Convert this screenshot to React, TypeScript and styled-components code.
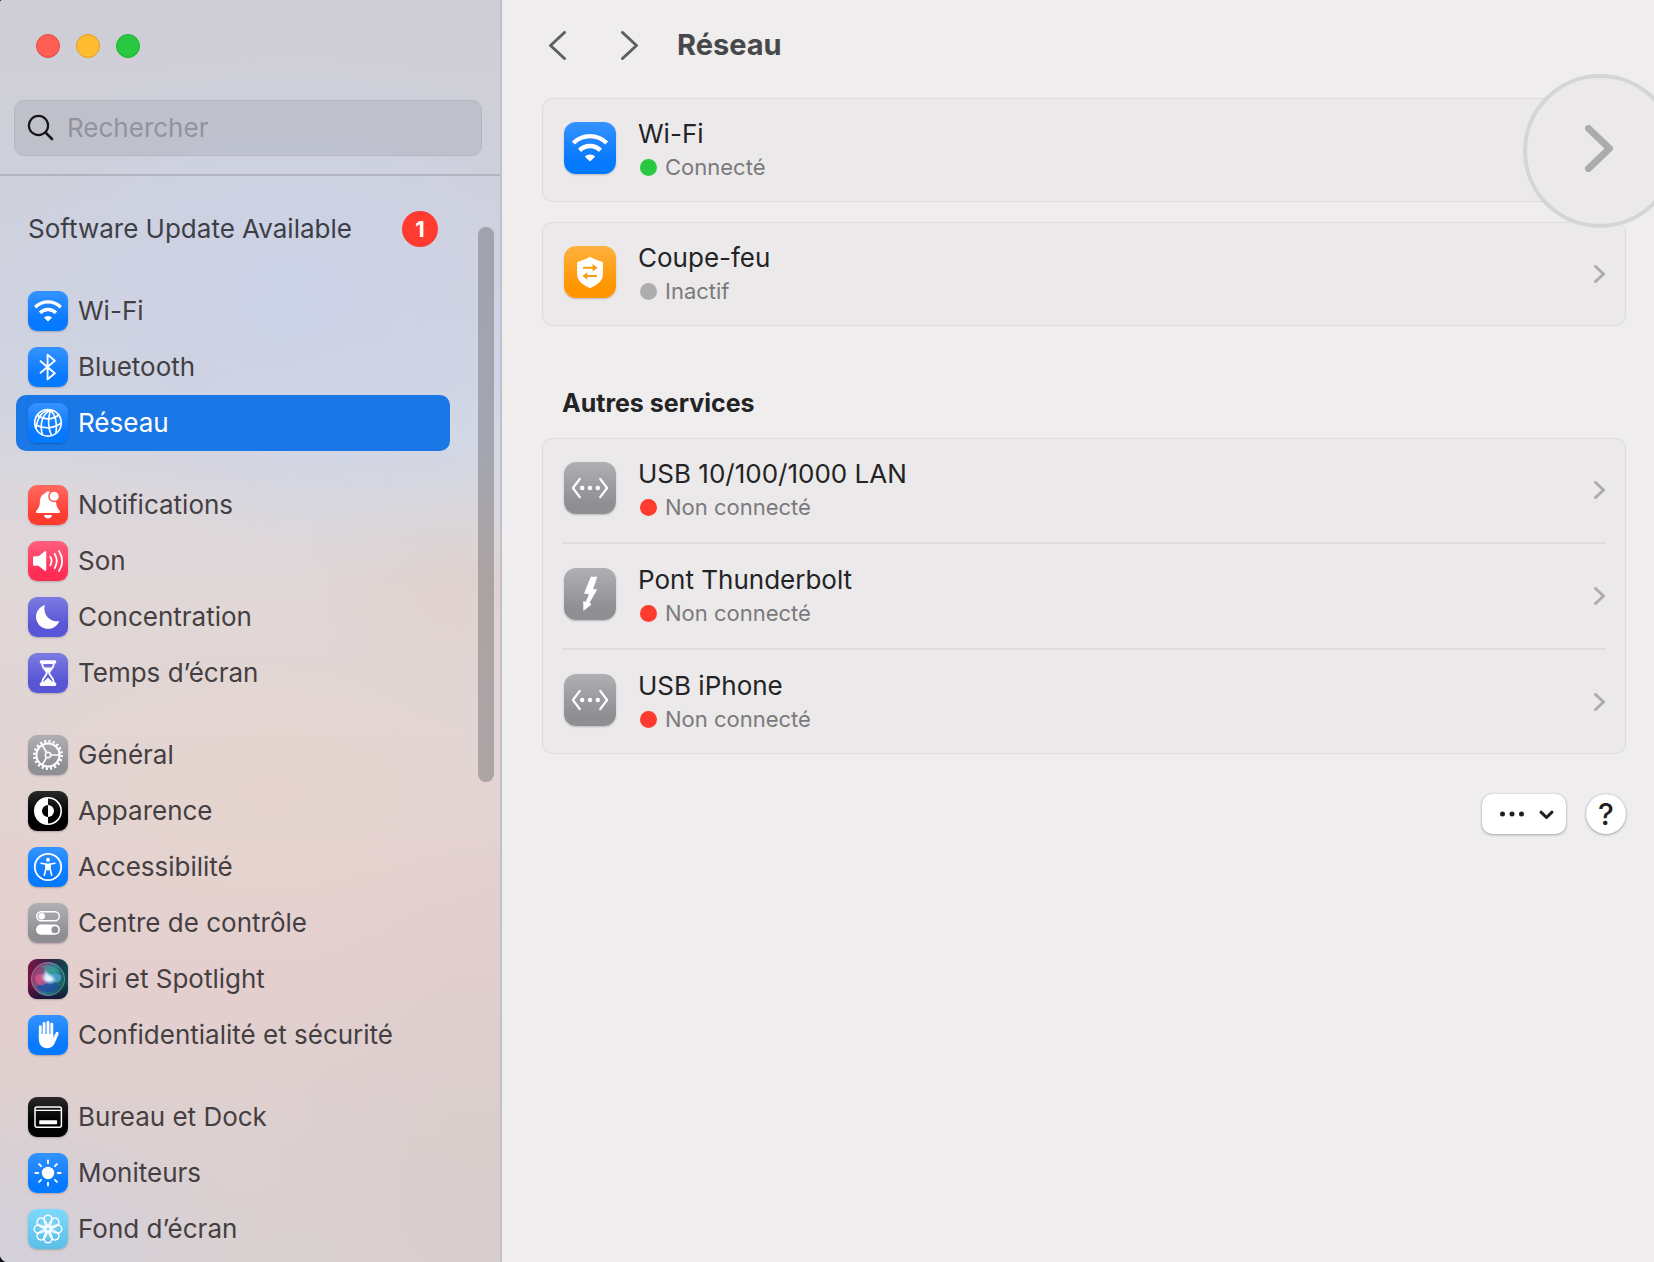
import React from "react";
import styled, { createGlobalStyle } from "styled-components";

const GlobalStyle = createGlobalStyle`
  *, *::before, *::after { box-sizing: border-box; }
  body {
    margin: 0;
    background: #111;
    font-family: Inter, "Liberation Sans", sans-serif;
    -webkit-font-smoothing: antialiased;
  }
  button, input { font: inherit; }
  ul { list-style: none; margin: 0; padding: 0; }
`;

const Window = styled.div`
  display: flex;
  height: 100vh;
  overflow: hidden;
  border-radius: 3px 0 0 8px;
  background: #efedee;
`;

/* ---------- Sidebar ---------- */

const Sidebar = styled.aside`
  position: relative;
  flex: none;
  display: flex;
  flex-direction: column;
  width: 502px;
  overflow: hidden;
  border-right: 2px solid #bfc0cd;
  background:
    radial-gradient(ellipse 340px 240px at 290px 290px, rgba(203, 210, 232, 0.9), rgba(203, 210, 232, 0) 100%),
    radial-gradient(ellipse 320px 160px at 470px 430px, rgba(211, 217, 230, 0.9), rgba(211, 217, 230, 0) 100%),
    radial-gradient(ellipse 160px 160px at 460px 570px, rgba(224, 208, 202, 0.8), rgba(224, 208, 202, 0) 100%),
    radial-gradient(ellipse 300px 160px at 270px 790px, rgba(230, 213, 205, 0.9), rgba(230, 213, 205, 0) 100%),
    radial-gradient(ellipse 260px 340px at 502px 1180px, rgba(216, 205, 203, 0.8), rgba(216, 205, 203, 0) 100%),
    radial-gradient(ellipse 260px 160px at 0 1250px, rgba(211, 208, 218, 1), rgba(211, 208, 218, 0) 100%),
    linear-gradient(180deg, #cfced5 0, #cfd0db 200px, #d1d4e0 400px, #dcd7dc 500px, #e1d7d7 600px, #e1d5d5 740px, #e3d1d0 860px, #e4cfce 980px, #dfd0d0 1100px, #d9d0d0 1262px);
`;

const TrafficLights = styled.div`
  display: flex;
  gap: 16px;
  padding: 34px 36px 42px;
`;

const Light = styled.button<{ $fill: string; $edge: string }>`
  width: 24px;
  height: 24px;
  padding: 0;
  border: 1px solid ${(p) => p.$edge};
  border-radius: 50%;
  background: ${(p) => p.$fill};
`;

const SearchArea = styled.div`
  padding: 0 18px 18px 14px;
  border-bottom: 2px solid #b3b4c0;
`;

const SearchBox = styled.label`
  display: flex;
  align-items: center;
  gap: 12px;
  height: 56px;
  padding: 0 12px;
  border: 1px solid #b4b5c0;
  border-radius: 10px;
  background: rgba(120, 125, 135, 0.18);
`;

const SearchInput = styled.input`
  flex: 1;
  min-width: 0;
  padding: 0;
  border: 0;
  outline: 0;
  background: transparent;
  color: #26262a;
  font-size: 26px;
  line-height: 34px;
  &::placeholder { color: #92939e; opacity: 1; }
`;

const SideNav = styled.nav`
  display: flex;
  flex-direction: column;
  gap: 26px;
  padding: 25px 50px 0 16px;
`;

const UpdateLink = styled.a`
  display: flex;
  align-items: center;
  justify-content: space-between;
  height: 56px;
  padding: 0 12px;
  color: #3e3f46;
  font-size: 26px;
  line-height: 34px;
  text-decoration: none;
  white-space: nowrap;
`;

const Badge = styled.span`
  width: 36px;
  height: 36px;
  border-radius: 50%;
  background: #ff3b30;
  color: #fff;
  font-size: 22px;
  font-weight: 700;
  line-height: 36px;
  text-align: center;
`;

const SideLink = styled.a`
  display: flex;
  align-items: center;
  gap: 10px;
  height: 56px;
  padding: 0 12px;
  border-radius: 10px;
  color: #443f42;
  font-size: 26px;
  line-height: 34px;
  text-decoration: none;
  white-space: nowrap;
  &[aria-current="page"] {
    background: #1a77e6;
    color: #fff;
  }
`;

const ScrollThumb = styled.div`
  position: absolute;
  top: 227px;
  right: 6px;
  width: 16px;
  height: 555px;
  border-radius: 8px;
  background: rgba(108, 106, 112, 0.46);
`;

const tones = {
  blue: "linear-gradient(#3593ff, #0a7aff 70%, #007aff)",
  red: "linear-gradient(#ff6a61, #ff3b30 80%)",
  pink: "linear-gradient(#ff5f80, #ff2d55 80%)",
  indigo: "linear-gradient(#7d7be2, #5856d6 70%)",
  gray: "linear-gradient(#b0b0b4, #8e8e93 80%)",
  black: "linear-gradient(#2a2a2a, #000 60%)",
  orange: "linear-gradient(#ffb03e, #ff9500 80%)",
  sky: "linear-gradient(#7fd9fb, #5bbde8)",
  siri: "linear-gradient(90deg, #7a1440, #37224b 50%, #0d4a4c)",
};

type Tone = keyof typeof tones;

const Tile = styled.span<{ $tone: Tone; $size: number }>`
  flex: none;
  display: block;
  width: ${(p) => p.$size}px;
  height: ${(p) => p.$size}px;
  border-radius: ${(p) => (p.$size > 40 ? 12 : 9)}px;
  background: ${(p) => tones[p.$tone]};
  box-shadow: 0 1px 2px rgba(0, 0, 0, 0.22);
  svg { display: block; width: 100%; height: 100%; }
`;

/* ---------- Main pane ---------- */

const Main = styled.main`
  flex: 1;
  min-width: 0;
  padding: 0 28px 0 40px;
`;

const Header = styled.header`
  display: flex;
  align-items: center;
  height: 98px;
  padding: 0 0 8px 3px;
`;

const NavButton = styled.button`
  display: flex;
  align-items: center;
  justify-content: center;
  width: 24px;
  height: 36px;
  margin-right: 48px;
  padding: 0;
  border: 0;
  background: none;
  color: #5f5e60;
  & + & { margin-right: 36px; }
`;

const Title = styled.h1`
  margin: 0;
  color: #48474a;
  font-size: 29px;
  font-weight: 700;
  line-height: 38px;
`;

const Cards = styled.div`
  display: grid;
  gap: 20px;
`;

const Card = styled.ul`
  border-radius: 10px;
  background: #ebe9ea;
  box-shadow: inset 0 0 0 1px #dddbdc;
`;

const CardItem = styled.li`
  position: relative;
  & + &::before {
    content: "";
    display: block;
    height: 2px;
    margin: 0 20px;
    background: #dddbdc;
  }
`;

const ServiceLink = styled.a`
  display: flex;
  align-items: center;
  gap: 22px;
  padding: 19px 21px 19px 22px;
  color: #adabac;
  text-decoration: none;
`;

const ServiceIcon = styled.span`
  align-self: flex-start;
  padding-top: 5px;
`;

const ServiceText = styled.span`
  flex: 1;
  display: flex;
  flex-direction: column;
`;

const ServiceName = styled.span`
  color: #242325;
  font-size: 26px;
  line-height: 34px;
`;

const Status = styled.span<{ $dot: string }>`
  display: flex;
  align-items: center;
  gap: 8px;
  padding-left: 2px;
  color: #7b797b;
  font-size: 22px;
  line-height: 32px;
  &::before {
    content: "";
    width: 17px;
    height: 17px;
    border-radius: 50%;
    background: ${(p) => p.$dot};
  }
`;

const Magnifier = styled.span`
  position: absolute;
  top: -24px;
  right: -51px;
  display: flex;
  align-items: center;
  justify-content: center;
  width: 154px;
  height: 154px;
  padding: 0 2px 5px 0;
  border: 4px solid #d6d5d6;
  border-radius: 50%;
  background: #ebe9ea;
  color: #adabac;
`;

const SectionTitle = styled.h2`
  margin: 60px 0 18px;
  padding-left: 20px;
  color: #242325;
  font-size: 25px;
  font-weight: 700;
  line-height: 34px;
`;

const Footer = styled.footer`
  display: flex;
  justify-content: flex-end;
  gap: 20px;
  padding-top: 40px;
`;

const FooterButton = styled.button<{ $round?: boolean }>`
  display: flex;
  align-items: center;
  justify-content: center;
  width: ${(p) => (p.$round ? 40 : 84)}px;
  height: 40px;
  padding: 0;
  border: 0;
  border-radius: ${(p) => (p.$round ? 20 : 10)}px;
  background: #fff;
  box-shadow: 0 0 1px rgba(0, 0, 0, 0.3), 0 1px 3px rgba(0, 0, 0, 0.28);
  color: #1f1f21;
  font-size: 30px;
  font-weight: 500;
  line-height: 40px;
`;

/* ---------- Glyphs ---------- */

const line = {
  fill: "none",
  stroke: "#fff",
  strokeLinecap: "round" as const,
  strokeLinejoin: "round" as const,
};

const WifiGlyph = () => (
  <svg viewBox="0 0 40 40" aria-hidden="true">
    <path d="M7.200 16.200a18 18 0 0 1 25.600 0" {...line} strokeLinecap="butt" strokeWidth="3.400" />
    <path d="M12 21.800a11.300 11.300 0 0 1 16 0" {...line} strokeLinecap="butt" strokeWidth="3.400" />
    <path d="M16 26.600a5.600 5.600 0 0 1 8 0L20.700 29.900a1 1 0 0 1-1.400 0Z" fill="#fff" />
  </svg>
);

const BluetoothGlyph = () => (
  <svg viewBox="0 0 40 40" aria-hidden="true">
    <path d="M12.6 14.2 26.8 26.2 19.6 32.4V7.6L26.8 13.8 12.6 25.8" {...line} strokeWidth="1.9" />
  </svg>
);

const GlobeGlyph = () => (
  <svg viewBox="0 0 40 40" aria-hidden="true">
    <g {...line} strokeWidth="1.6">
      <circle cx="20" cy="19.8" r="13.3" />
      <path d="M22.5 7C15 11 11 20 14.5 32" />
      <path d="M22.5 7C20 15 20 25 23.5 32.5" />
      <path d="M22.5 7c5 5 7 14 5.5 22.5" />
      <path d="M22.5 7C14 8 10 13 8 25" />
      <path d="M9.5 12.5c6 4 14 4.500 21.5-.5" />
      <path d="M7 21.500c8 4.500 18 4.500 26.2-1.500" />
    </g>
  </svg>
);

const BellGlyph = () => (
  <svg viewBox="0 0 40 40" aria-hidden="true">
    <path
      d="M8 26.7c0-1.500 3.7-3.2 3.9-9.2.1-5.5 2.3-8.3 5.4-9.2C17.8 7 18.7 6.6 20 6.6s2.2.4 2.7 1.7c3.1.9 5.3 3.7 5.4 9.2.2 6 3.9 7.7 3.9 9.2 0 .8-.6 1.4-1.6 1.4H9.6c-1 0-1.6-.6-1.6-1.4ZM16 30h8c-.2 2-1.9 3.5-4 3.5s-3.8-1.5-4-3.5Z"
      fill="#fff"
    />
    <circle cx="26.2" cy="11.2" r="6" fill="#ff574e" />
    <circle cx="26.2" cy="11.2" r="4.5" fill="#fff" />
  </svg>
);

const SpeakerGlyph = () => (
  <svg viewBox="0 0 40 40" aria-hidden="true">
    <path
      d="M6.5 15.2h4.1l6.2-5c.7-.5 1.4-.2 1.4.7v18.2c0 .9-.7 1.2-1.4.7l-6.2-5H6.5c-.9 0-1.5-.6-1.5-1.5v-6.6c0-.9.6-1.5 1.5-1.5Z"
      fill="#fff"
    />
    <g {...line} strokeWidth="1.8">
      <path d="M22.3 15.8q2.6 4.2 0 8.4" />
      <path d="M26.6 12.8q4.4 7.2 0 14.4" />
      <path d="M31 9.9q6.4 10.1 0 20.2" />
    </g>
  </svg>
);

const MoonGlyph = () => (
  <svg viewBox="0 0 40 40" aria-hidden="true">
    <path d="M16.9 8.1A12.1 12.1 0 1 0 31.4 24.1 12.6 12.6 0 0 1 16.9 8.1Z" fill="#fff" />
  </svg>
);

const HourglassGlyph = () => (
  <svg viewBox="0 0 40 40" aria-hidden="true">
    <rect x="11.7" y="7.2" width="16.6" height="3.4" rx="1.5" fill="#fff" />
    <rect x="11.7" y="29.6" width="16.6" height="3.4" rx="1.5" fill="#fff" />
    <path d="M14 10c0 6 4.8 7.3 4.8 10.1S14 24.5 14 30h12c0-5.5-4.8-7.1-4.8-9.9S26 16 26 10Z" {...line} strokeWidth="1.8" />
    <path d="M15 14.5h10c-1 2-3.2 3.300-4 5h-2c-.8-1.700-3-3-4-5ZM20 24.500l5.200 5H14.800Z" fill="#fff" />
  </svg>
);

const GearGlyph = () => (
  <svg viewBox="0 0 40 40" aria-hidden="true">
    <g fill="none" stroke="#fff">
      <circle cx="20" cy="20" r="11.6" strokeWidth="2" />
      <circle cx="20" cy="20" r="13.7" strokeWidth="2.6" strokeDasharray="2.1 2.204" />
      <circle cx="20" cy="20" r="2.7" strokeWidth="1.5" />
      <path d="M22.7 20h9M18.600 17.700l-4.500-7.800M18.600 22.300l-4.500 7.800" strokeWidth="1.7" />
    </g>
  </svg>
);

const AppearanceGlyph = () => (
  <svg viewBox="0 0 40 40" aria-hidden="true">
    <circle cx="20" cy="20" r="13.2" fill="none" stroke="#fff" strokeWidth="1.6" />
    <path d="M20 7a13 13 0 0 0 0 26v-7a6 6 0 0 1 0-12Z" fill="#fff" />
    <path d="M20 14a6 6 0 0 1 0 12Z" fill="#fff" />
  </svg>
);

const AccessibilityGlyph = () => (
  <svg viewBox="0 0 40 40" aria-hidden="true">
    <circle cx="20" cy="20" r="13.2" fill="none" stroke="#fff" strokeWidth="1.8" />
    <circle cx="20" cy="12.7" r="2" fill="#fff" />
    <path d="M13.2 16.3 18 17.2v4.400l-1.700 6.600M26.800 16.300 22 17.200v4.400l1.700 6.600" {...line} strokeWidth="1.6" />
    <path d="M17.5 16.6h5v5.600l-1.200 1h-2.600l-1.200-1Z" fill="#fff" />
  </svg>
);

const SwitchesGlyph = () => (
  <svg viewBox="0 0 40 40" aria-hidden="true">
    <rect x="8.7" y="8.7" width="22.6" height="9" rx="4.5" fill="none" stroke="#fff" strokeWidth="1.5" />
    <circle cx="13.7" cy="13.2" r="3.3" fill="#fff" />
    <rect x="8" y="21.6" width="24" height="10.2" rx="5.1" fill="#fff" />
    <circle cx="26.9" cy="26.7" r="3.5" fill="#929297" />
  </svg>
);

const SiriGlyph = () => (
  <svg viewBox="0 0 40 40" aria-hidden="true">
    <defs>
      <radialGradient id="siri-core" cx="0.5" cy="0.5" r="0.5">
        <stop offset="0" stopColor="#fff" />
        <stop offset="0.4" stopColor="#eaf6ff" stopOpacity="0.9" />
        <stop offset="1" stopColor="#8ccdf0" stopOpacity="0" />
      </radialGradient>
      <linearGradient id="siri-orb" x1="0" y1="0" x2="1" y2="0.4">
        <stop offset="0" stopColor="#d42a6a" />
        <stop offset="0.45" stopColor="#7d6f9c" />
        <stop offset="0.65" stopColor="#2f9db0" />
        <stop offset="1" stopColor="#17706f" />
      </linearGradient>
      <linearGradient id="siri-floor" x1="0" y1="0" x2="0" y2="1">
        <stop offset="0.6" stopColor="#0b1030" stopOpacity="0" />
        <stop offset="1" stopColor="#0b1030" stopOpacity="0.7" />
      </linearGradient>
    </defs>
    <rect width="40" height="40" rx="9" fill="url(#siri-floor)" />
    <circle cx="20" cy="20" r="16.5" fill="url(#siri-orb)" fillOpacity="0.75" stroke="#9fb6bd" strokeOpacity="0.6" strokeWidth="0.9" />
    <path d="M9 29c2-7 8-9 14-7 5 1.500 7 4 8 7a15.500 15.500 0 0 1-22 0Z" fill="#1f4f9e" fillOpacity="0.8" />
    <path d="M7 18c3-5 10-4 14 2-3 7-10 8-12 4-1-2-2-4-2-6Z" fill="#f0568a" fillOpacity="0.65" />
    <path d="M21 20c2-7 9-7 12-3 1 6-4 9-12 3Z" fill="#5fb8f0" fillOpacity="0.6" />
    <path d="M14 7c8-2 15 1 18 7-6-1-10 1-12 5-1-5-3-9-6-12Z" fill="#2fc49a" fillOpacity="0.45" />
    <ellipse cx="20.500" cy="19.500" rx="8.500" ry="6" fill="url(#siri-core)" transform="rotate(25 20.5 19.500)" />
    <ellipse cx="18.500" cy="15.500" rx="3" ry="6" fill="url(#siri-core)" fillOpacity="0.5" transform="rotate(-20 18.5 15.500)" />
  </svg>
);

const HandGlyph = () => (
  <svg viewBox="0 0 40 40" aria-hidden="true">
    <g {...line} strokeWidth="2.9">
      <path d="M12.3 11.7V23M16.100 8.400V20M20 7.400V20M23.800 9.300V21" />
      <path d="m25.4 25.5 3.800-7.200" />
    </g>
    <path d="M10.85 19h14.400v5.200l3-4.700 2.200.2-3.300 7.300c-1.500 4-3.900 6.200-7.700 6.200-5.600 0-8.600-3.700-8.600-9.200Z" fill="#fff" />
  </svg>
);

const DockGlyph = () => (
  <svg viewBox="0 0 40 40" aria-hidden="true">
    <rect x="7" y="10" width="26.4" height="20.3" rx="2" fill="none" stroke="#fff" strokeWidth="1.5" />
    <path d="M7 13.4h26.400" stroke="#fff" strokeWidth="1.4" />
    <rect x="11.2" y="23.2" width="18" height="4" rx="0.8" fill="#fff" />
  </svg>
);

const SunGlyph = () => (
  <svg viewBox="0 0 40 40" aria-hidden="true">
    <circle cx="20" cy="20" r="6.2" fill="#fff" />
    <g {...line} strokeWidth="1.9">
      {[0, 45, 90, 135, 180, 225, 270, 315].map((a) => (
        <path key={a} d="M20 10.2V7.4" transform={`rotate(${a} 20 20)`} />
      ))}
    </g>
  </svg>
);

const FlowerGlyph = () => (
  <svg viewBox="0 0 40 40" aria-hidden="true">
    <g fill="none" stroke="#fff" strokeWidth="1.5">
      {[0, 45, 90, 135, 180, 225, 270, 315].map((a) => (
        <path
          key={a}
          d="M18.6 18.400C16.600 15 16 13 16 10.200a4 4 0 0 1 8 0C24 13 23.400 15 21.400 18.400"
          transform={`rotate(${a} 20 20)`}
        />
      ))}
      <circle cx="20" cy="20" r="2.2" />
    </g>
  </svg>
);

const ShieldGlyph = () => (
  <svg viewBox="0 0 52 52" aria-hidden="true">
    <path
      d="M26 10.8c3.6 2.300 7.200 3.800 11.200 4.600 1.200.2 1.700.8 1.700 2v10.400c0 6.500-4.500 10.500-12.100 14-.6.3-1 .3-1.600 0-7.600-3.500-12.100-7.500-12.100-14V17.400c0-1.200.5-1.800 1.700-2 4-.8 7.600-2.300 11.200-4.600Z"
      fill="#fff"
    />
    <g {...line} stroke="#f99a14" strokeWidth="1.9">
      <path d="M19.8 21.7h11M32.200 30H21" />
    </g>
    <path d="m28.6 18 5 3.700-5 3.700ZM23.400 26.300l-5 3.700 5 3.700Z" fill="#f99a14" />
  </svg>
);

const EthernetGlyph = () => (
  <svg viewBox="0 0 52 52" aria-hidden="true">
    <path d="M15.8 16.8 8.900 26l6.900 9.200M36.200 16.800l6.900 9.200-6.900 9.200" {...line} strokeWidth="2.2" />
    <g fill="#fff">
      <circle cx="18.2" cy="26" r="2.2" />
      <circle cx="26" cy="26" r="2.2" />
      <circle cx="33.8" cy="26" r="2.2" />
    </g>
  </svg>
);

const BoltGlyph = () => (
  <svg viewBox="0 0 52 52" aria-hidden="true">
    <path d="M26.8 8.800h6.500L29.200 21l4 .6-7.600 13.200 1.800 1.600-8 6.600-.2-10 2.600.8 3.200-7.500-5-.8Z" fill="#fff" />
  </svg>
);

const SearchGlyph = () => (
  <svg width="28" height="28" viewBox="0 0 28 28" fill="none" stroke="#161618" strokeWidth="2.2" strokeLinecap="round" aria-hidden="true">
    <circle cx="11.5" cy="11.5" r="9.6" />
    <path d="m18.6 18.600 6.400 6.400" strokeWidth="2.6" />
  </svg>
);

const Chevron = ({ w, h, stroke, flip }: { w: number; h: number; stroke: number; flip?: boolean }) => {
  const s = stroke / 2;
  const d = flip ? `M${w - s} ${s}L${s} ${h / 2}L${w - s} ${h - s}` : `M${s} ${s}L${w - s} ${h / 2}L${s} ${h - s}`;
  return (
    <svg width={w} height={h} viewBox={`0 0 ${w} ${h}`} aria-hidden="true">
      <path d={d} fill="none" stroke="currentColor" strokeWidth={stroke} strokeLinecap="round" strokeLinejoin="round" />
    </svg>
  );
};

const MoreGlyph = () => (
  <svg width="84" height="40" viewBox="0 0 84 40" aria-hidden="true">
    <g fill="currentColor">
      <circle cx="20.5" cy="20" r="2.5" />
      <circle cx="30" cy="20" r="2.5" />
      <circle cx="39.5" cy="20" r="2.5" />
    </g>
    <path d="m59 18.2 5.500 5.300 5.500-5.300" fill="none" stroke="currentColor" strokeWidth="3" strokeLinecap="round" strokeLinejoin="round" />
  </svg>
);

/* ---------- Data ---------- */

type NavEntry = { label: string; tone: Tone; Glyph: React.FC; current?: boolean };

const groups: NavEntry[][] = [
  [
    { label: "Wi-Fi", tone: "blue", Glyph: WifiGlyph },
    { label: "Bluetooth", tone: "blue", Glyph: BluetoothGlyph },
    { label: "Réseau", tone: "blue", Glyph: GlobeGlyph, current: true },
  ],
  [
    { label: "Notifications", tone: "red", Glyph: BellGlyph },
    { label: "Son", tone: "pink", Glyph: SpeakerGlyph },
    { label: "Concentration", tone: "indigo", Glyph: MoonGlyph },
    { label: "Temps d’écran", tone: "indigo", Glyph: HourglassGlyph },
  ],
  [
    { label: "Général", tone: "gray", Glyph: GearGlyph },
    { label: "Apparence", tone: "black", Glyph: AppearanceGlyph },
    { label: "Accessibilité", tone: "blue", Glyph: AccessibilityGlyph },
    { label: "Centre de contrôle", tone: "gray", Glyph: SwitchesGlyph },
    { label: "Siri et Spotlight", tone: "siri", Glyph: SiriGlyph },
    { label: "Confidentialité et sécurité", tone: "blue", Glyph: HandGlyph },
  ],
  [
    { label: "Bureau et Dock", tone: "black", Glyph: DockGlyph },
    { label: "Moniteurs", tone: "blue", Glyph: SunGlyph },
    { label: "Fond d’écran", tone: "sky", Glyph: FlowerGlyph },
  ],
];

type Service = { name: string; status: string; dot: string; tone: Tone; Glyph: React.FC; magnified?: boolean };

const RED = "#ff3b30";

const primary: Service[] = [
  { name: "Wi-Fi", status: "Connecté", dot: "#28c840", tone: "blue", Glyph: WifiGlyph, magnified: true },
  { name: "Coupe-feu", status: "Inactif", dot: "#aeacad", tone: "orange", Glyph: ShieldGlyph },
];

const others: Service[] = [
  { name: "USB 10/100/1000 LAN", status: "Non connecté", dot: RED, tone: "gray", Glyph: EthernetGlyph },
  { name: "Pont Thunderbolt", status: "Non connecté", dot: RED, tone: "gray", Glyph: BoltGlyph },
  { name: "USB iPhone", status: "Non connecté", dot: RED, tone: "gray", Glyph: EthernetGlyph },
];

const ServiceItem = ({ name, status, dot, tone, Glyph, magnified }: Service) => (
  <CardItem>
    <ServiceLink href="#">
      <ServiceIcon>
        <Tile $tone={tone} $size={52}>
          <Glyph />
        </Tile>
      </ServiceIcon>
      <ServiceText>
        <ServiceName>{name}</ServiceName>
        <Status $dot={dot}>{status}</Status>
      </ServiceText>
      {magnified ? (
        <Magnifier>
          <Chevron w={28} h={47} stroke={7} />
        </Magnifier>
      ) : (
        <Chevron w={11} h={18} stroke={3} />
      )}
    </ServiceLink>
  </CardItem>
);

export default function App() {
  return (
    <>
      <GlobalStyle />
      <Window>
        <Sidebar>
          <TrafficLights>
            <Light $fill="#ff5f57" $edge="#e2463f" aria-label="Fermer" />
            <Light $fill="#febc2e" $edge="#e1a116" aria-label="Réduire" />
            <Light $fill="#28c840" $edge="#1fae31" aria-label="Agrandir" />
          </TrafficLights>
          <SearchArea>
            <SearchBox>
              <SearchGlyph />
              <SearchInput type="text" placeholder="Rechercher" aria-label="Rechercher" />
            </SearchBox>
          </SearchArea>
          <SideNav aria-label="Réglages">
            <UpdateLink href="#">
              Software Update Available
              <Badge>1</Badge>
            </UpdateLink>
            {groups.map((group) => (
              <ul key={group[0].label}>
                {group.map(({ label, tone, Glyph, current }) => (
                  <li key={label}>
                    <SideLink href="#" aria-current={current ? "page" : undefined}>
                      <Tile $tone={tone} $size={40}>
                        <Glyph />
                      </Tile>
                      {label}
                    </SideLink>
                  </li>
                ))}
              </ul>
            ))}
          </SideNav>
          <ScrollThumb />
        </Sidebar>
        <Main>
          <Header>
            <NavButton aria-label="Précédent">
              <Chevron w={17} h={29} stroke={3} flip />
            </NavButton>
            <NavButton aria-label="Suivant">
              <Chevron w={17} h={29} stroke={3} />
            </NavButton>
            <Title>Réseau</Title>
          </Header>
          <Cards>
            {primary.map((s) => (
              <Card key={s.name}>
                <ServiceItem {...s} />
              </Card>
            ))}
          </Cards>
          <SectionTitle>Autres services</SectionTitle>
          <Card>
            {others.map((s) => (
              <ServiceItem key={s.name} {...s} />
            ))}
          </Card>
          <Footer>
            <FooterButton aria-label="Plus d’options" aria-haspopup="menu">
              <MoreGlyph />
            </FooterButton>
            <FooterButton $round aria-label="Aide">
              ?
            </FooterButton>
          </Footer>
        </Main>
      </Window>
    </>
  );
}
